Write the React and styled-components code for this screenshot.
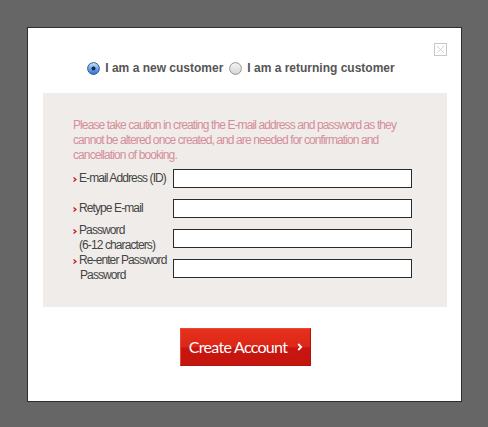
import React from 'react';
import styled, { createGlobalStyle } from 'styled-components';

const GlobalStyle = createGlobalStyle`
  html, body {
    margin: 0;
    padding: 0;
    background: #666666;
  }
  body {
    font-family: "Liberation Sans", Arial, sans-serif;
  }
`;

const fields = [
  { id: 'email', type: 'text', lines: ['E-mail Address (ID)'] },
  { id: 'retype', type: 'text', lines: ['Retype E-mail'] },
  { id: 'password', type: 'password', lines: ['Password', '(6-12 characters)'] },
  { id: 'reenter', type: 'password', lines: ['Re-enter Password', 'Password'], indent: true },
];

const RadioIcon = ({ checked }) => (
  <svg width="13" height="13" viewBox="0 0 13 13">
    <defs>
      <linearGradient id="rOn" x1="0" y1="0" x2="0" y2="1">
        <stop offset="0" stopColor="#cfe3fb" />
        <stop offset="0.5" stopColor="#6fa7ea" />
        <stop offset="1" stopColor="#2f72d4" />
      </linearGradient>
      <linearGradient id="rOff" x1="0" y1="0" x2="0" y2="1">
        <stop offset="0" stopColor="#f4f4f4" />
        <stop offset="1" stopColor="#d6d6d6" />
      </linearGradient>
    </defs>
    <circle
      cx="6.5"
      cy="6.5"
      r="5.9"
      fill={checked ? 'url(#rOn)' : 'url(#rOff)'}
      stroke={checked ? '#2a4f86' : '#8a8a8a'}
      strokeWidth="0.9"
    />
    {checked && <circle cx="6.5" cy="6.5" r="2" fill="#1c2a3d" />}
  </svg>
);

const App = () => {
  const [mode, setMode] = React.useState('new');

  return (
    <>
      <GlobalStyle />
      <Page>
        <Modal>
          <CloseButton aria-label="Close">
            <svg width="13" height="13" viewBox="0 0 13 13">
              <rect x="0.5" y="0.5" width="12" height="12" fill="#fff" stroke="#c8c8c8" />
              <path d="M3 3 L10 10 M10 3 L3 10" stroke="#c8c8c8" strokeWidth="0.8" />
            </svg>
          </CloseButton>

          <RadioRow>
            <RadioOption onClick={() => setMode('new')}>
              <RadioIcon checked={mode === 'new'} />
              I am a new customer
            </RadioOption>
            <RadioOption onClick={() => setMode('returning')}>
              <RadioIcon checked={mode === 'returning'} />
              I am a returning customer
            </RadioOption>
          </RadioRow>

          <Panel>
            <Caution>
              Please take caution in creating the E-mail address and password as they
              cannot be altered once created, and are needed for confirmation and
              cancellation of booking.
            </Caution>
            {fields.map((field) => (
              <FieldRow key={field.id}>
                <Label>
                  {field.lines.map((line, i) => (
                    <LabelLine key={i} $indent={i > 0 && field.indent}>
                      {i === 0 && (
                        <Marker>
                          <svg width="4" height="5" viewBox="0 0 4 5">
                            <path d="M0.5 0.5 L3 2.5 L0.5 4.5" fill="none" stroke="#c4122f" strokeWidth="1.2" />
                          </svg>
                        </Marker>
                      )}
                      {line}
                    </LabelLine>
                  ))}
                </Label>
                <Input type={field.type} />
              </FieldRow>
            ))}
          </Panel>

          <ButtonRow>
            <CreateButton>
              Create Account
              <svg width="6" height="8" viewBox="0 0 6 8">
                <path d="M1.2 1 L4.2 4 L1.2 7" fill="none" stroke="#fff" strokeWidth="1.8" />
              </svg>
            </CreateButton>
          </ButtonRow>
        </Modal>
      </Page>
    </>
  );
};

// Designs for components
const Page = styled.div`
  width: 488px;
  height: 427px;
  padding: 27px 0 0 27px;
  box-sizing: border-box;
`;

const Modal = styled.div`
  position: relative;
  width: 435px;
  height: 375px;
  box-sizing: border-box;
  background: #fff;
  border: 1px solid #2e2e2e;
  padding: 30px 14px 0 15px;
  display: flex;
  flex-direction: column;
`;

const CloseButton = styled.div`
  position: absolute;
  top: 15px;
  right: 14px;
  width: 13px;
  height: 13px;
  line-height: 0;
  cursor: pointer;
`;

const RadioRow = styled.div`
  display: flex;
  justify-content: center;
  align-items: center;
  height: 20px;
  margin-bottom: 15px;
  gap: 6px;
  padding-right: 8px;
`;

const RadioOption = styled.label`
  display: flex;
  align-items: center;
  gap: 5px;
  font-family: "Liberation Sans", Arial, sans-serif;
  font-weight: bold;
  font-size: 12px;
  color: #555;
  cursor: pointer;

  svg {
    flex-shrink: 0;
  }
`;

const Panel = styled.div`
  background: #f0ecea;
  height: 214px;
  box-sizing: border-box;
  padding: 25px 20px 0 30px;
  display: flex;
  flex-direction: column;
`;

const Caution = styled.p`
  margin: 0;
  font-size: 12px;
  line-height: 15px;
  letter-spacing: -0.9px;
  color: #d48e9a;
`;

const FieldRow = styled.div`
  display: flex;
  align-items: center;
  height: 30px;
`;

const Label = styled.div`
  width: 100px;
  font-size: 12px;
  line-height: 15px;
  letter-spacing: -0.9px;
  color: #444;
`;

const LabelLine = styled.div`
  display: flex;
  align-items: center;
  padding-left: ${(p) => (p.$indent ? '7px' : '6px')};
  position: relative;
`;

const Marker = styled.span`
  position: absolute;
  left: 0;
  top: 6px;
  line-height: 0;
`;

const Input = styled.input`
  width: 239px;
  height: 19px;
  box-sizing: border-box;
  border: 1px solid #2b2b2b;
  background: #fff;
  padding: 0 4px;
  font-size: 12px;
  outline: none;
`;

const ButtonRow = styled.div`
  display: flex;
  justify-content: center;
  margin-top: 21px;
`;

const CreateButton = styled.button`
  width: 131px;
  height: 38px;
  box-sizing: border-box;
  border: 1px solid #b5120c;
  border-top-color: #e8473a;
  border-left-color: #e8473a;
  background: linear-gradient(to bottom, #e4301d 0%, #de2717 50%, #c8150f 52%, #c5150f 100%);
  color: #fff;
  font-family: Lato, "Liberation Sans", sans-serif;
  font-size: 16px;
  letter-spacing: -0.7px;
  display: flex;
  align-items: center;
  justify-content: center;
  gap: 10px;
  padding: 0 0 2px 2px;
  cursor: pointer;

  svg {
    margin-top: 2px;
  }
`;

export default App;
